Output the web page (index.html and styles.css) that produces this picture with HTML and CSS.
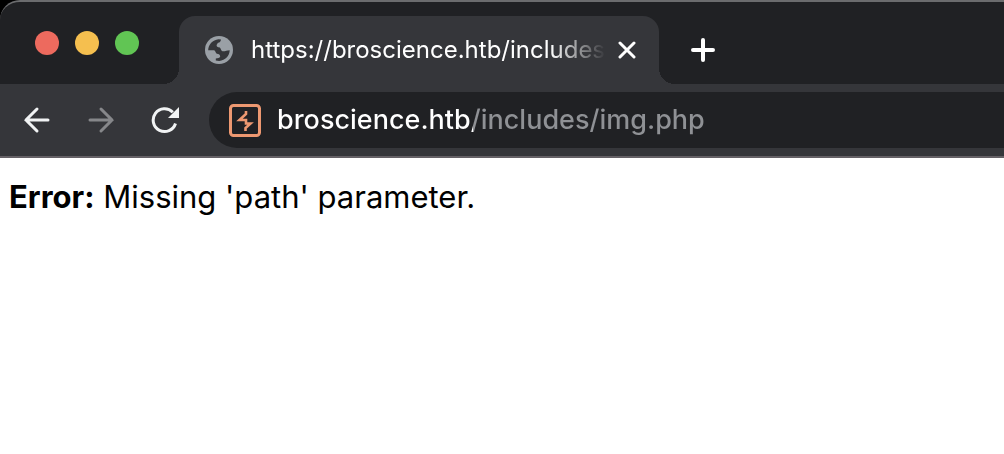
FILE: index.html
```html
<!DOCTYPE html>
<html lang="en">
<head>
<meta charset="utf-8">
<title>https://broscience.htb/includes/img.php</title>
<link rel="stylesheet" href="styles.css">
</head>
<body>
<header class="browser">
  <div class="tab-strip">
    <div class="window-controls">
      <button class="light light-close" aria-label="Close window"></button>
      <button class="light light-minimize" aria-label="Minimize window"></button>
      <button class="light light-zoom" aria-label="Zoom window"></button>
    </div>
    <div class="tab">
      <svg class="globe" viewBox="0 0 28 28" aria-hidden="true">
        <circle cx="14" cy="14" r="14" fill="#9aa0a6"/>
        <path d="M3.2 14.2C3.2 8.5 7.8 3.8 13.5 3.2L16 3.6C15.8 5.6 14.8 6.6 13.2 6.8C12.4 7 12.4 8.2 11.6 9C11.4 10.6 12.6 11.2 14.8 11.4C15.8 12 15.8 14.4 17.4 15.2C19.6 15.8 21.6 14.2 24.7 14.2C24.5 19.6 20.4 24.4 14.2 24.9L10.8 24.4V22.6C12.6 22.4 14.8 22.4 15.2 20.6C15.2 18.8 14 18 11.8 17.8C10.6 17.2 10.6 14.8 9.2 14.2Z" fill="#35363a"/>
      </svg>
      <span class="tab-title">https://broscience.htb/includes</span>
      <button class="icon-button tab-close" aria-label="Close tab">
        <svg width="18" height="18" viewBox="0 0 18 18"><path d="M2 2L16 16M16 2L2 16" stroke="#fff" stroke-width="3" stroke-linecap="round"/></svg>
      </button>
    </div>
    <button class="icon-button new-tab" aria-label="New tab">
      <svg width="24" height="24" viewBox="0 0 24 24"><path d="M12 2V22M2 12H22" stroke="#fff" stroke-width="4" stroke-linecap="round"/></svg>
    </button>
  </div>
  <div class="toolbar">
    <nav class="navigation" aria-label="History">
      <button class="icon-button" aria-label="Back">
        <svg width="28" height="28" viewBox="0 0 28 28" fill="none" stroke="#f1f3f4" stroke-width="3" stroke-linecap="round"><path d="M25 14H3M14 3L3 14L14 25"/></svg>
      </button>
      <button class="icon-button" aria-label="Forward">
        <svg width="28" height="28" viewBox="0 0 28 28" fill="none" stroke="#86878a" stroke-width="3" stroke-linecap="round"><path d="M3 14H25M14 3L25 14L14 25"/></svg>
      </button>
      <button class="icon-button" aria-label="Reload">
        <svg width="28" height="28" viewBox="0 0 28 28" fill="none"><path d="M24.5 17.5A11.4 11.4 0 1 1 21.8 6.2" stroke="#f1f3f4" stroke-width="3"/><path d="M28 1V12H17Z" fill="#f1f3f4"/></svg>
      </button>
    </nav>
    <label class="address-bar">
      <svg class="site-icon" width="32" height="33" viewBox="0 0 32 33" fill="none" aria-hidden="true">
        <rect x="1.5" y="1.5" width="29" height="30" rx="3" stroke="#ed9871" stroke-width="3"/>
        <path d="M17 7V10L10.5 16H17V19.5H21.5L16.5 24V27" stroke="#ed9871" stroke-width="2.6"/>
      </svg>
      <input class="address" type="text" aria-label="Address" value="broscience.htb/includes/img.php" spellcheck="false">
    </label>
  </div>
</header>
<main class="page"><strong>Error:</strong> Missing 'path' parameter.</main>
</body>
</html>
```
FILE: styles.css
```css
* { box-sizing: border-box; }
html { background: #fff; }
body {
  margin: 0;
  font-family: Inter, "Liberation Sans", sans-serif;
}
button {
  margin: 0;
  padding: 0;
  border: 0;
  background: none;
}
svg { display: block; flex: none; }
.browser {
  background: #000;
  overflow: hidden;
}
.tab-strip {
  display: flex;
  height: 84px;
  border-top: 2px solid #6b6c6e;
  border-top-left-radius: 20px;
  background: #202124;
}
.window-controls {
  display: flex;
  gap: 16px;
  width: 179px;
  padding: 29px 0 0 35px;
}
.light {
  width: 24px;
  height: 24px;
  border-radius: 50%;
}
.light-close { background: #ed6a5e; }
.light-minimize { background: #f5bf4f; }
.light-zoom { background: #61c554; }
.tab {
  position: relative;
  display: flex;
  align-items: center;
  width: 480px;
  margin-top: 14px;
  padding: 0 23px 0 26px;
  border-radius: 16px 16px 0 0;
  background: #35363a;
}
.tab::before,
.tab::after {
  content: "";
  position: absolute;
  bottom: 0;
  width: 16px;
  height: 16px;
}
.tab::before {
  right: 100%;
  background: radial-gradient(circle at 0 0, transparent 16px, #35363a 16px);
}
.tab::after {
  left: 100%;
  background: radial-gradient(circle at 100% 0, transparent 16px, #35363a 16px);
}
.globe { width: 28px; height: 28px; }
.tab-title {
  flex: 1;
  margin: 0 8px 0 18px;
  overflow: hidden;
  color: #fff;
  font-size: 24px;
  line-height: 32px;
  white-space: nowrap;
  mask-image: linear-gradient(to right, #000 calc(100% - 60px), transparent calc(100% - 4px));
}
.icon-button {
  display: flex;
  align-items: center;
  justify-content: center;
}
.new-tab {
  margin: 14px 0 0 32px;
}
.toolbar {
  display: flex;
  align-items: center;
  height: 74px;
  border-bottom: 2px solid #656166;
  background: #35363a;
}
.navigation {
  display: flex;
  gap: 36px;
  padding: 0 30px 0 23px;
}
.address-bar {
  display: flex;
  flex: 1;
  align-items: center;
  gap: 16px;
  height: 56px;
  padding-left: 20px;
  border-radius: 28px 0 0 28px;
  background: #202124;
}
.address {
  flex: 1;
  min-width: 0;
  padding: 0;
  border: 0;
  outline: 0;
  background: linear-gradient(to right, #fff 196px, #8f9195 196px);
  background-clip: text;
  color: transparent;
  font-family: inherit;
  font-size: 27px;
  font-weight: 500;
  line-height: 36px;
}
.page {
  padding: 16px 9px;
  font-size: 31px;
  line-height: 46px;
}
```
